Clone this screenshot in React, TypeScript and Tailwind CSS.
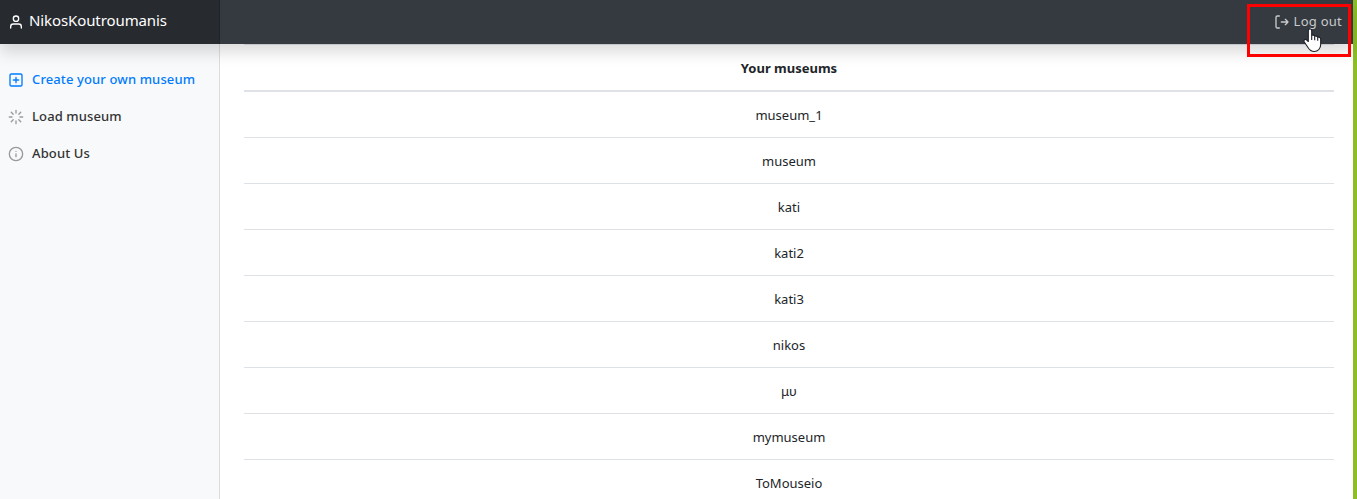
import type { ReactNode } from "react";

const museums = ["museum_1", "museum", "kati", "kati2", "kati3", "nikos", "μυ", "mymuseum", "ToMouseio"];

function Icon({ children, className }: { children: ReactNode; className: string }) {
  return (
    <svg width="16" height="16" viewBox="0 0 24 24" fill="none" stroke="currentColor" strokeWidth="2" strokeLinecap="round" strokeLinejoin="round" className={className}>
      {children}
    </svg>
  );
}

export default function App() {
  return (
    <div className="flex h-[499px] w-[1357px] overflow-hidden bg-white font-['Noto_Sans','Open_Sans',sans-serif] text-[#212529]">
      <div className="relative flex min-w-0 flex-1 flex-col">
        <header className="relative z-10 flex h-11 shrink-0 items-center bg-[#343a40] shadow-[0_8px_16px_rgba(0,0,0,0.15)]">
          <div className="flex h-full w-[220px] items-center border-r border-[#202428] bg-[#272b30] pl-2 text-white">
            <Icon className="mr-[5px]">
              <path d="M20 21v-2a4 4 0 0 0-4-4H8a4 4 0 0 0-4 4v2" />
              <circle cx="12" cy="7" r="4" />
            </Icon>
            <span className="-mt-1 text-[15px] leading-6 tracking-[-0.1px]">NikosKoutroumanis</span>
          </div>
          <div className="ml-auto flex items-center pr-[11px] text-[#c8cacc]">
            <Icon className="mr-1">
              <path d="M8 21H5a2 2 0 0 1-2-2V5a2 2 0 0 1 2-2h3" />
              <path d="M17 16l4-4-4-4M21 12H11" />
            </Icon>
            <span className="-mt-0.5 text-[13px] leading-5 tracking-[0.25px]">Log out</span>
          </div>
        </header>
        <div className="flex min-h-0 flex-1">
          <nav className="flex w-[220px] shrink-0 flex-col border-r border-[#dcdddf] bg-[#f8f9fa] pt-[17px] text-[13px] font-medium tracking-[0.12px] text-[#333]">
            <a className="flex h-[37px] items-center pl-2 text-[#007bff]">
              <Icon className="mr-2">
                <rect x="3" y="3" width="18" height="18" rx="2" />
                <path d="M12 8v8M8 12h8" />
              </Icon>
              <span>Create your own museum</span>
            </a>
            <a className="flex h-[37px] items-center pl-2">
              <Icon className="mr-2 text-[#999]">
                <path d="M12 2v4M12 18v4M4.93 4.93l2.83 2.83M16.24 16.24l2.83 2.83M2 12h4M18 12h4M4.93 19.07l2.83-2.83M16.24 7.76l2.83-2.83" />
              </Icon>
              <span>Load museum</span>
            </a>
            <a className="flex h-[37px] items-center pl-2">
              <Icon className="mr-2 text-[#999]">
                <circle cx="12" cy="12" r="10" />
                <path d="M12 16v-4M12 8h.01" />
              </Icon>
              <span>About Us</span>
            </a>
          </nav>
          <main className="min-w-0 flex-1 overflow-hidden pr-[19px] pl-6">
            <div className="flex h-12 items-center justify-center border-t border-b-2 border-[#dee2e6] pt-0.5 text-[13px] font-bold">Your museums</div>
            {museums.map((name, i) => (
              <div key={name} className={`flex items-center justify-center text-[13px] ${i ? "h-[46px] border-t border-[#dee2e6] pt-0.5" : "h-[45px] pt-0.5"}`}>
                {name}
              </div>
            ))}
          </main>
        </div>
        <div className="absolute top-1 right-[2px] z-20 h-[53px] w-[104px] border-[3px] border-[#f00]" />
        <svg className="absolute top-7 left-[1303px] z-30" width="19" height="25" viewBox="0 0 19 25">
          <path d="M7 1C8 1 8.700 1.700 8.700 2.700V7.500C9.500 6.700 11.400 7 11.700 8.300C12.600 7.700 14.300 8.100 14.700 9.300C16.200 8.700 17.700 9.600 17.700 11.200V16.500C17.700 20.500 15 23.500 11.200 23.500C8 23.500 6.500 22 5 19.500L1.300 14C.3 12.300 2 10.700 3.500 11.800L5.300 13.500V2.700C5.300 1.700 6 1 7 1Z" fill="#fff" stroke="#1d1d28" strokeWidth="1.100" strokeLinejoin="round" />
          <path d="M8.700 7.500v4.500M11.700 8.300v4M14.700 9.300v3.500" fill="none" stroke="#1d1d28" strokeWidth="1.100" />
        </svg>
      </div>
      <div className="w-1 shrink-0 bg-[#8cbf26]" />
    </div>
  );
}
